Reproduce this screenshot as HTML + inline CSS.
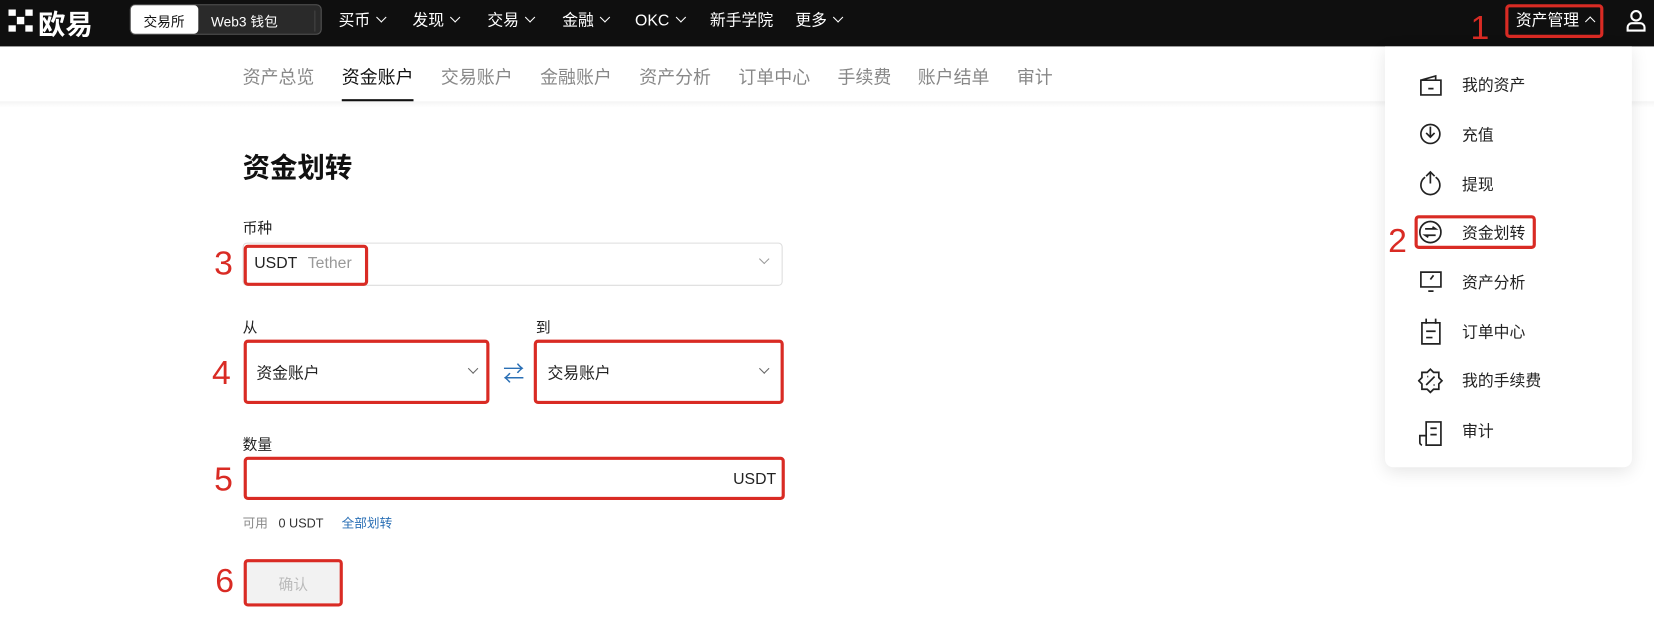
<!DOCTYPE html>
<html><head><meta charset="utf-8"><style>
*{margin:0;padding:0;box-sizing:border-box}
body{width:1654px;height:627px;overflow:hidden;background:#fff;font-family:"Liberation Sans","Noto Sans CJK SC",sans-serif;position:relative;color:#111}
#w{position:absolute;left:0;top:0;width:1568px;height:595px;transform:scale(1.05485);transform-origin:0 0}
.a{position:absolute;white-space:nowrap}
.top{position:absolute;left:0;top:0;width:1568px;height:44px;background:#0f0f0f}
.nav{color:#fff;font-size:15px;top:10px;line-height:20px}
.sub{font-size:17px;color:#888;top:59px}
.red{position:absolute;border:3px solid #d92b24;border-radius:4px}
.num{position:absolute;color:#d92b24;font-size:32px;font-family:"Liberation Sans",sans-serif}
.lbl{font-size:14px;color:#222}
.mi{font-size:15px;color:#222}
.chev{display:inline-block;width:7px;height:7px;border-right:1.5px solid currentColor;border-bottom:1.5px solid currentColor;transform:rotate(45deg);margin-left:7px;position:relative;top:-4px}
</style></head><body><div id="w">
<div class="top"></div>
<svg class="a" style="left:8px;top:9px" width="26" height="22" viewBox="0 0 26 22"><g fill="#fff"><rect x="0" y="0" width="7" height="6"/><rect x="16" y="0" width="7" height="6"/><rect x="8" y="7" width="7" height="7"/><rect x="0" y="15" width="7" height="6"/><rect x="16" y="15" width="7" height="6"/></g></svg>
<div class="a" style="left:36px;top:3px;color:#fff;font-size:26px;font-weight:bold">欧易</div>
<div class="a" style="left:123px;top:4px;width:182px;height:29px;border:1px solid #555;border-radius:5px;background:#2a2a2a"></div>
<div class="a" style="left:124px;top:5px;width:64px;height:27px;background:#fff;border-radius:4px"></div>
<div class="a" style="left:136px;top:10px;font-size:13px;color:#111">交易所</div>
<div class="a" style="left:200px;top:10px;font-size:13px;color:#fff">Web3 钱包</div>
<div class="a" style="left:298px;top:10px;width:1px;height:20px;background:#444"></div>
<div class="a nav" style="left:321px">买币<span class="chev"></span></div>
<div class="a nav" style="left:391px">发现<span class="chev"></span></div>
<div class="a nav" style="left:462px">交易<span class="chev"></span></div>
<div class="a nav" style="left:533px">金融<span class="chev"></span></div>
<div class="a nav" style="left:602px">OKC<span class="chev"></span></div>
<div class="a nav" style="left:673px">新手学院</div>
<div class="a nav" style="left:754px">更多<span class="chev"></span></div>
<div class="a nav" style="left:1437px">资产管理<span class="chev" style="transform:rotate(-135deg);top:0"></span></div>
<div class="red" style="left:1427px;top:4px;width:93px;height:32px"></div>
<div class="num" style="left:1394px;top:8px">1</div>
<svg class="a" style="left:1541px;top:9px" width="20" height="22" viewBox="0 0 20 22" fill="none" stroke="#fff" stroke-width="2"><circle cx="10" cy="6" r="4.5"/><path d="M2 20v-3a4 4 0 0 1 4-4h8a4 4 0 0 1 4 4v3z"/></svg>
<div class="a" style="left:0;top:96px;width:1568px;height:6px;background:linear-gradient(#f4f4f4,#fff)"></div>
<div class="a sub" style="left:230px">资产总览</div>
<div class="a sub" style="left:324px;color:#111">资金账户</div>
<div class="a" style="left:324px;top:94px;width:68px;height:2px;background:#111"></div>
<div class="a sub" style="left:418px">交易账户</div>
<div class="a sub" style="left:512px">金融账户</div>
<div class="a sub" style="left:606px">资产分析</div>
<div class="a sub" style="left:700px">订单中心</div>
<div class="a sub" style="left:794px">手续费</div>
<div class="a sub" style="left:870px">账户结单</div>
<div class="a sub" style="left:964px">审计</div>
<div class="a" style="left:230px;top:139px;font-size:26px;font-weight:bold">资金划转</div>
<div class="a lbl" style="left:230px;top:206px">币种</div>
<div class="a" style="left:230px;top:230px;width:512px;height:41px;border:1px solid #ddd;border-radius:4px"></div>
<div class="a" style="left:241px;top:241px;font-size:15px;color:#222">USDT <span style="color:#999;margin-left:6px">Tether</span></div>
<div class="a" style="left:714px;top:240px;color:#999"><span class="chev"></span></div>
<div class="red" style="left:231px;top:232px;width:118px;height:39px"></div>
<div class="num" style="left:203px;top:231px">3</div>
<div class="a lbl" style="left:230px;top:300px">从</div>
<div class="a lbl" style="left:508px;top:300px">到</div>
<div class="red" style="left:231px;top:322px;width:233px;height:61px"></div>
<div class="a" style="left:243px;top:343px;font-size:15px;color:#222">资金账户</div>
<div class="a" style="left:438px;top:344px;color:#666"><span class="chev"></span></div>
<div class="a" style="left:477px;top:338px;font-size:20px;color:#2a6fb5">⇄</div>
<div class="red" style="left:506px;top:322px;width:237px;height:61px"></div>
<div class="a" style="left:519px;top:343px;font-size:15px;color:#222">交易账户</div>
<div class="a" style="left:714px;top:344px;color:#666"><span class="chev"></span></div>
<div class="num" style="left:201px;top:335px">4</div>
<div class="a lbl" style="left:230px;top:411px">数量</div>
<div class="red" style="left:231px;top:433px;width:513px;height:41px"></div>
<div class="a" style="left:695px;top:446px;font-size:15px;color:#222">USDT</div>
<div class="num" style="left:203px;top:436px">5</div>
<div class="a" style="left:230px;top:487px;font-size:12px;color:#888">可用 &nbsp; <span style="color:#333">0 USDT</span> <span style="color:#2a6fb5;margin-left:14px">全部划转</span></div>
<div class="a" style="left:233px;top:532px;width:89px;height:40px;background:#f2f2f2;border-radius:4px"></div>
<div class="a" style="left:264px;top:544px;font-size:14px;color:#bbb">确认</div>
<div class="red" style="left:231px;top:530px;width:94px;height:45px"></div>
<div class="num" style="left:204px;top:532px">6</div>
<div class="a" style="left:1313px;top:44px;width:234px;height:399px;background:#fff;border-radius:0 0 8px 8px;box-shadow:0 4px 16px rgba(0,0,0,.1)"></div>
<svg class="a" style="left:1344px;top:70px" width="26" height="260" viewBox="0 0 26 260" fill="none" stroke="#222" stroke-width="1.6">
<path d="M3 6h19v14H3zM3 6l14-4v4M10 14h5"/>
<circle cx="12" cy="57" r="9"/><path d="M12 50v10M8 56l4 4 4-4"/>
<path d="M7 98a9 9 0 1 0 10 0M12 94v10M8 97l4-4 4 4"/>
<circle cx="12" cy="150" r="10"/><path d="M7 147h10l-3-2M17 153H7l3 2"/>
<path d="M3 188h19v14H3zM10 206h5M15 191l-3 4"/>
<path d="M4 238h17v20H4zM8 234v5M17 234v5M8 246h9M8 252h6" transform="translate(0,-2)"/>
</svg>
<svg class="a" style="left:1344px;top:348px" width="26" height="76" viewBox="0 0 26 76" fill="none" stroke="#222" stroke-width="1.6">
<path d="M12 2l3 3h5v5l3 3-3 3v5h-5l-3 3-3-3H4v-5l-3-3 3-3V5h5zM8 17l8-8M9 9h1M15 17h1"/>
<path d="M8 52h14v22H8zM4 74a3 3 0 0 1-2-3v-6h6M12 58h6M12 64h6"/>
</svg>
<div class="a mi" style="left:1386px;top:70px">我的资产</div>
<div class="a mi" style="left:1386px;top:117px">充值</div>
<div class="a mi" style="left:1386px;top:164px">提现</div>
<div class="a mi" style="left:1386px;top:210px">资金划转</div>
<div class="a mi" style="left:1386px;top:257px">资产分析</div>
<div class="a mi" style="left:1386px;top:304px">订单中心</div>
<div class="a mi" style="left:1386px;top:350px">我的手续费</div>
<div class="a mi" style="left:1386px;top:398px">审计</div>
<div class="red" style="left:1341px;top:204px;width:115px;height:32px"></div>
<div class="num" style="left:1316px;top:210px">2</div>
</div></body></html>
